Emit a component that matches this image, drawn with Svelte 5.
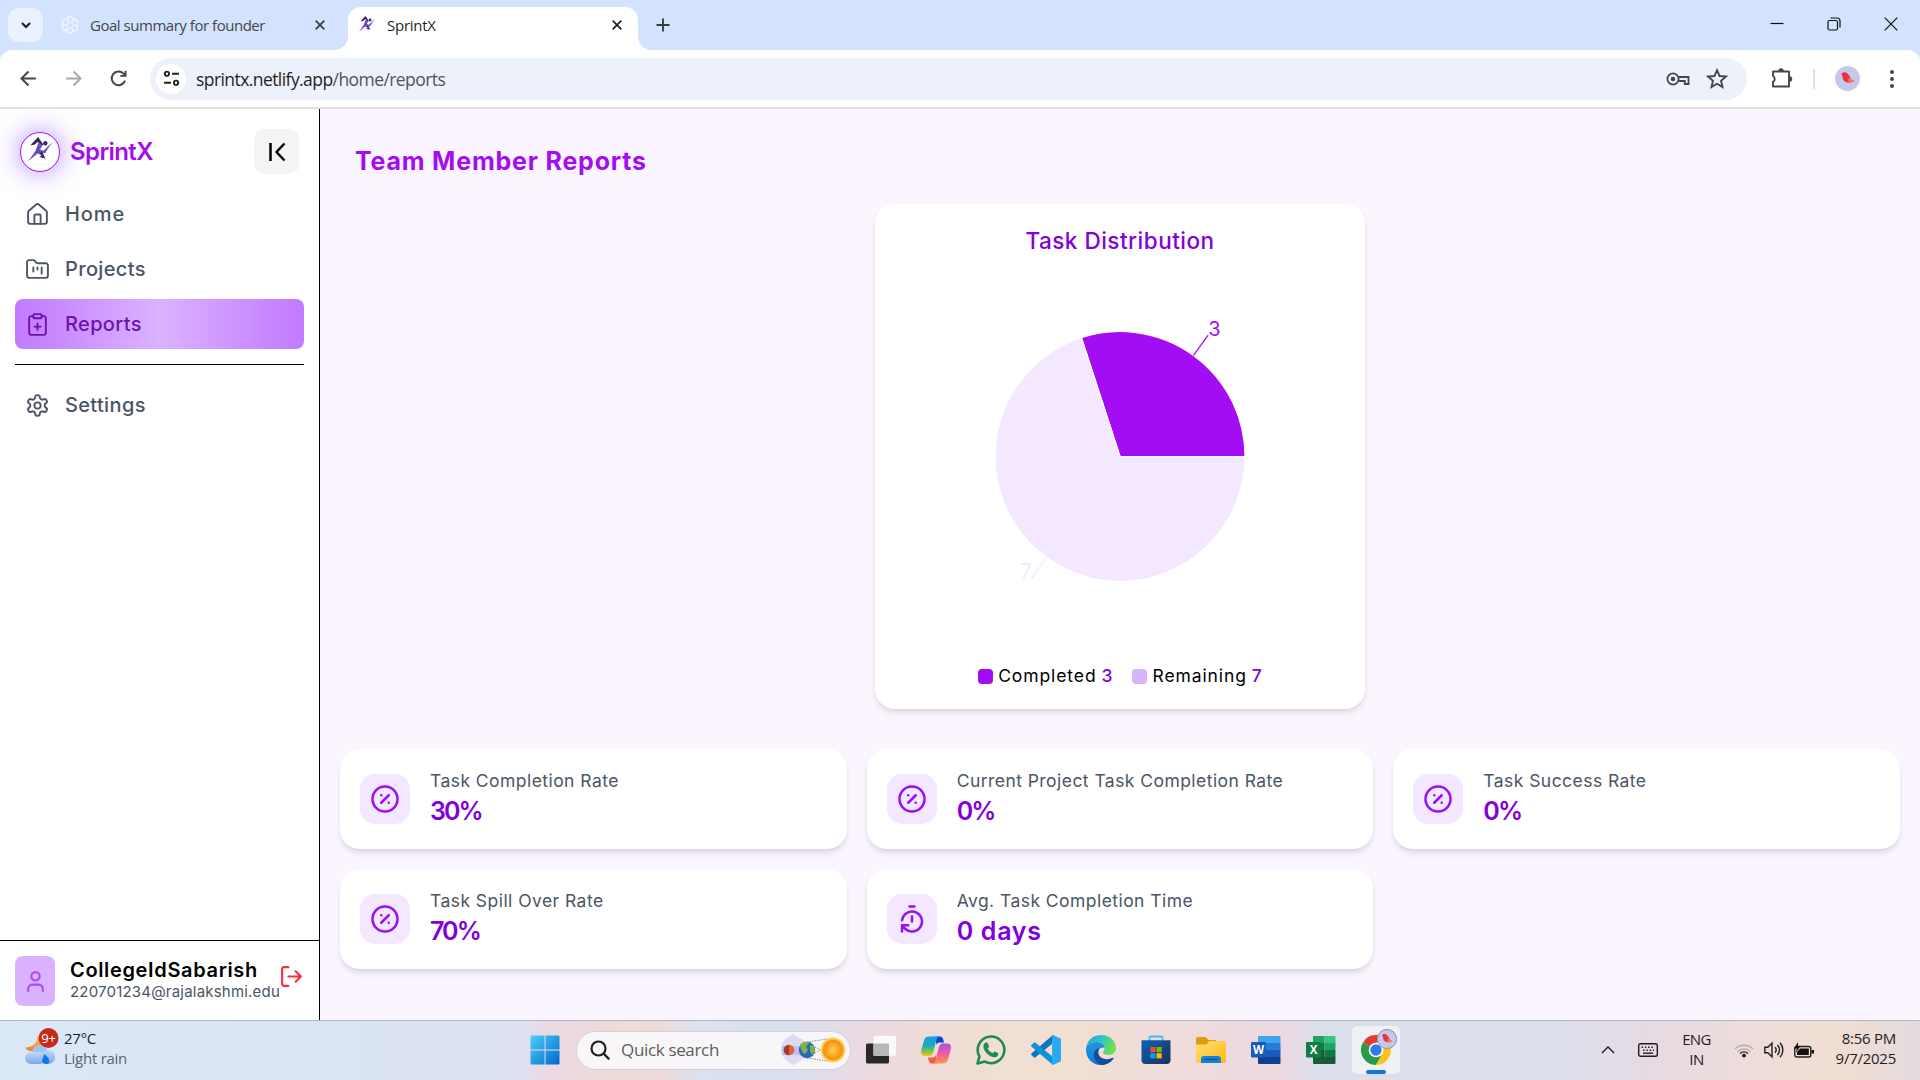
<script>
  const navItems = [
    { label: 'Home', icon: 'house' },
    { label: 'Projects', icon: 'kanban' },
    { label: 'Reports', icon: 'clipboard', active: true }
  ];

  const metrics = [
    { label: 'Task Completion Rate', value: '30%', icon: 'percent' },
    { label: 'Current Project Task Completion Rate', value: '0%', icon: 'percent' },
    { label: 'Task Success Rate', value: '0%', icon: 'percent' },
    { label: 'Task Spill Over Rate', value: '70%', icon: 'percent' },
    { label: 'Avg. Task Completion Time', value: '0 days', icon: 'timer' }
  ];

  const completed = 3;
  const remaining = 7;
  const cx = 245, cy = 171.5, r = 125;

  // Point on the pie, measured counter-clockwise from three o'clock.
  function point(angle, radius) {
    return [cx + radius * Math.cos(angle), cy - radius * Math.sin(angle)];
  }
  const split = (completed / (completed + remaining)) * 2 * Math.PI;
  const [sx, sy] = point(split, r);
  const completedPath = `M${cx} ${cy}L${cx + r} ${cy}A${r} ${r} 0 0 0 ${sx} ${sy}Z`;
  const remainingPath = `M${cx} ${cy}L${sx} ${sy}A${r} ${r} 0 1 0 ${cx + r} ${cy}Z`;
  const mid = split / 2;
  const [a1, a2] = point(mid, r);
  const [b1, b2] = point(mid, r + 25);
  const [c1, c2] = point(mid + Math.PI, r);
  const [d1, d2] = point(mid + Math.PI, r + 25);
</script>

{#snippet icon(name)}
  <svg class="lucide" viewBox="0 0 24 24">
    {#if name === 'house'}
      <path d="M15 21v-8a1 1 0 0 0-1-1h-4a1 1 0 0 0-1 1v8" />
      <path d="M3 10a2 2 0 0 1 .709-1.528l7-5.999a2 2 0 0 1 2.582 0l7 5.999A2 2 0 0 1 21 10v9a2 2 0 0 1-2 2H5a2 2 0 0 1-2-2z" />
    {:else if name === 'kanban'}
      <path d="M4 20h16a2 2 0 0 0 2-2V8a2 2 0 0 0-2-2h-7.93a2 2 0 0 1-1.66-.9l-.82-1.2A2 2 0 0 0 7.93 3H4a2 2 0 0 0-2 2v13c0 1.1.9 2 2 2Z" />
      <path d="M8 10v4M12 10v2M16 10v6" />
    {:else if name === 'clipboard'}
      <rect width="8" height="4" x="8" y="2" rx="1" />
      <path d="M16 4h2a2 2 0 0 1 2 2v14a2 2 0 0 1-2 2H6a2 2 0 0 1-2-2V6a2 2 0 0 1 2-2h2M9 14h6M12 17v-6" />
    {:else if name === 'settings'}
      <path d="M12.22 2h-.44a2 2 0 0 0-2 2v.18a2 2 0 0 1-1 1.73l-.43.25a2 2 0 0 1-2 0l-.15-.08a2 2 0 0 0-2.73.73l-.22.38a2 2 0 0 0 .73 2.73l.15.1a2 2 0 0 1 1 1.72v.51a2 2 0 0 1-1 1.74l-.15.09a2 2 0 0 0-.73 2.73l.22.38a2 2 0 0 0 2.73.73l.15-.08a2 2 0 0 1 2 0l.43.25a2 2 0 0 1 1 1.73V20a2 2 0 0 0 2 2h.44a2 2 0 0 0 2-2v-.18a2 2 0 0 1 1-1.73l.43-.25a2 2 0 0 1 2 0l.15.08a2 2 0 0 0 2.73-.73l.22-.39a2 2 0 0 0-.73-2.73l-.15-.08a2 2 0 0 1-1-1.74v-.5a2 2 0 0 1 1-1.74l.15-.09a2 2 0 0 0 .73-2.73l-.22-.38a2 2 0 0 0-2.73-.73l-.15.08a2 2 0 0 1-2 0l-.43-.25a2 2 0 0 1-1-1.73V4a2 2 0 0 0-2-2z" />
      <circle cx="12" cy="12" r="3" />
    {:else if name === 'user'}
      <path d="M19 21v-2a4 4 0 0 0-4-4H9a4 4 0 0 0-4 4v2" />
      <circle cx="12" cy="7" r="4" />
    {:else if name === 'logout'}
      <path d="M9 21H5a2 2 0 0 1-2-2V5a2 2 0 0 1 2-2h4M16 17l5-5-5-5M21 12H9" />
    {:else if name === 'percent'}
      <circle cx="12" cy="12" r="10" />
      <path d="m15 9-6 6M9 9h.01M15 15h.01" />
    {:else if name === 'timer'}
      <path d="M10 2h4M12 14v-4M4 13a8 8 0 0 1 8-7 8 8 0 1 1-5.3 14L4 17.6M9 17H4v5" />
    {/if}
  </svg>
{/snippet}

{#snippet runner()}
  <svg class="runner" viewBox="0 0 26 26">
    <defs>
      <linearGradient id="run" x1="0" y1="1" x2="1" y2="0">
        <stop offset="0" stop-color="#8b5cf0" /><stop offset=".5" stop-color="#6a45bd" /><stop offset="1" stop-color="#8f6ce4" />
      </linearGradient>
    </defs>
    <path d="M2.500 8.500 10.500 0l5.500 8-2 1-3.500-4-4 3Z" fill="#33235c" />
    <path d="m11 5 4 4-2.500 4 3.500 1.200 9.700-9.200-8 12-5.700-1.500L0 25.500l8-11.500Z" fill="url(#run)" />
    <circle cx="18" cy="6.500" r="2.300" fill="#3b2a69" />
    <path d="m9.500 16 5.500-.5 3.200 7-6.400-1.600 2.300-1.700Z" fill="#3b2a69" />
  </svg>
{/snippet}

{#snippet bird()}
  <svg viewBox="0 0 25 25">
    <circle cx="12.5" cy="12.5" r="12.5" fill="#c5c9e9" />
    <path d="M6 8.500 8 6.200l3.200.3c2.500 2 4 4 4.300 6.200l4 2.600-3 .2-1 1.200-2.400-.2c-4-.2-6-3.500-5.600-7Z" fill="#ee3045" />
    <path d="m12.500 12 3.500 1 3.500 2.500-3 0-.5 1.500-2.500-1Z" fill="#f4774d" />
  </svg>
{/snippet}

<div class="screen">
  <header class="tabs">
    <button class="tab-menu" aria-label="Search tabs">
      <svg width="10" height="8" viewBox="0 0 10 8" class="line"><path d="m1 2 4 4 4-4" stroke-width="2.100" /></svg>
    </button>
    <div class="tab idle">
      <svg class="gpt" viewBox="0 0 18 18">
        {#each [0, 60, 120, 180, 240, 300] as a}
          <path d="M9 6.600 6.200 5V3.600a3 3 0 0 1 5.600-1.300L15 4.200" transform="rotate({a} 9 9)" />
        {/each}
      </svg>
      <span class="tab-title long">Goal summary for founder</span>
      <svg class="x" viewBox="0 0 10 10"><path d="m.7.7 8.600 8.600M9.300.7.7 9.300" /></svg>
    </div>
    <div class="tab current">
      <div class="fav">{@render runner()}</div>
      <span class="tab-title">SprintX</span>
      <svg class="x" viewBox="0 0 10 10"><path d="m.7.7 8.600 8.600M9.300.7.7 9.300" /></svg>
    </div>
    <svg class="plus" viewBox="0 0 14 14"><path d="M7 .5v13M.5 7h13" /></svg>
    <div class="window-controls">
      <svg viewBox="0 0 14 14"><path d="M.5 6.500h13" /></svg>
      <svg viewBox="0 0 14 14"><rect x="1" y="3.500" width="9.500" height="9.500" rx="1.500" /><path d="M3.500 1H10a3 3 0 0 1 3 3v6.500" /></svg>
      <svg viewBox="0 0 14 14"><path d="m.7.7 12.600 12.600M13.300.7.7 13.300" /></svg>
    </div>
  </header>

  <div class="toolbar">
    <svg class="nav-ic" viewBox="0 0 20 20"><path d="M17 10H3.500M10 3.300 3.300 10l6.700 6.700" /></svg>
    <svg class="nav-ic dim" viewBox="0 0 20 20"><path d="M3 10h13.500M10 3.300l6.700 6.700-6.700 6.700" /></svg>
    <svg class="nav-ic" viewBox="0 0 20 20"><path d="M16.200 12A6.500 6.500 0 1 1 14.800 5.400L16.500 7M16.700 2.500v5h-5" /></svg>
    <div class="omnibox">
      <div class="site">
        <svg viewBox="0 0 16 16"><path d="M8.500 3.500h6.500M1 12h6.500" /><circle cx="3.700" cy="3.500" r="2" /><circle cx="12.300" cy="12" r="2" /></svg>
      </div>
      <span class="url">sprintx.netlify.app<i>/home/reports</i></span>
      <svg class="key" viewBox="0 0 24 16"><circle cx="7" cy="8" r="5.600" /><circle cx="7" cy="8" r="2.300" class="fill" /><path d="M12.300 6H22.500v7h-3.700V10h-6.500" /></svg>
      <svg class="star" viewBox="0 0 20 20"><path d="m10 2 2.300 5.300 5.700.5-4.300 3.800 1.300 5.700-5-3-5 3 1.300-5.700L2 7.800l5.700-.5Z" /></svg>
    </div>
    <svg class="puzzle" viewBox="0 0 22 22"><path d="M2 4.500h16v15H2v-4.700a3.300 3.300 0 0 0 0-5.800Z" /><path class="fill" d="M7.300 4a2.700 2.700 0 0 1 5.400 0ZM18.500 9.300a2.700 2.700 0 0 1 0 5.400Z" /></svg>
    <span class="divider"></span>
    <div class="profile">{@render bird()}</div>
    <div class="dots"><b></b><b></b><b></b></div>
  </div>

  <div class="page">
    <aside>
      <div class="brand">
        <div class="logo">{@render runner()}</div>
        <strong>SprintX</strong>
        <button class="collapse" aria-label="Collapse sidebar">
          <svg viewBox="0 0 20 20"><path d="M3.500 1v18M17.500 1.500 9.500 10l8 8.500" /></svg>
        </button>
      </div>
      <nav>
        {#each navItems as item}
          <a class:active={item.active} href="#{item.label}">{@render icon(item.icon)}<span>{item.label}</span></a>
        {/each}
        <hr />
        <a href="#Settings">{@render icon('settings')}<span>Settings</span></a>
      </nav>
      <footer>
        <div class="avatar">{@render icon('user')}</div>
        <div class="who">
          <strong>CollegeIdSabarish</strong>
          <small>220701234@rajalakshmi.edu</small>
        </div>
        <div class="logout">{@render icon('logout')}</div>
      </footer>
    </aside>

    <main>
      <h1>Team Member Reports</h1>
      <section class="chart">
        <h2>Task Distribution</h2>
        <svg class="pie" viewBox="0 0 490 375">
          <path d={completedPath} fill="#a30df4" stroke="#fff" stroke-width="1.250" />
          <path d={remainingPath} fill="#f3e8ff" stroke="#fff" stroke-width="1.250" />
          <path d="M{a1} {a2}L{b1} {b2}" stroke="#a30df4" stroke-width="1.250" />
          <path d="M{c1} {c2}L{d1} {d2}" stroke="#f3e8ff" stroke-width="1.250" />
          <text x={b1} y={b2 + 0.5} fill="#a30df4">{completed}</text>
          <text x={d1} y={d2 + 0.5} fill="#f3e8ff" text-anchor="end">{remaining}</text>
        </svg>
        <div class="legend">
          <span class="swatch"></span><span class="name">Completed</span><em>{completed}</em>
          <span class="swatch light"></span><span class="name">Remaining</span><em>{remaining}</em>
        </div>
      </section>
      <section class="metrics">
        {#each metrics as m}
          <article>
            <div class="badge">{@render icon(m.icon)}</div>
            <div>
              <p>{m.label}</p>
              <strong class:pct={m.value.endsWith('%')}>{m.value}</strong>
            </div>
          </article>
        {/each}
      </section>
    </main>
  </div>

  <div class="taskbar">
    <div class="weather">
      <svg viewBox="0 0 36 38">
        <defs>
          <linearGradient id="cloud" x1="0" y1="0" x2="0" y2="1"><stop offset="0" stop-color="#c3dbfa" /><stop offset="1" stop-color="#7aa6e8" /></linearGradient>
          <linearGradient id="moon" x1="0" y1="0" x2="0" y2="1"><stop offset="0" stop-color="#f9c240" /><stop offset="1" stop-color="#ee8420" /></linearGradient>
        </defs>
        <path d="M13 8C14 15 9 19 1 19.500c3 5 12 5 17-1L20 8Z" fill="url(#moon)" />
        <circle cx="16" cy="25" r="8" fill="#9fc3f3" />
        <rect x="1" y="24" width="21" height="12" rx="6" fill="url(#cloud)" />
        <circle cx="24" cy="29" r="7" fill="url(#cloud)" />
        <path d="M20 26c3 2 6 5 5 8.500-1 2.500-7 2-7-1.500 0-2 2-4 2-7Z" fill="#0b78f0" />
        <circle cx="24.500" cy="10" r="10" fill="#c42b1c" />
        <text x="24.500" y="14.700">9+</text>
      </svg>
      <div><span>27°C</span><span class="soft">Light rain</span></div>
    </div>

    <div class="apps">
      <svg class="app" viewBox="0 0 30 30">
        <defs><linearGradient id="win" x1="0" y1="0" x2="1" y2="1"><stop offset="0" stop-color="#4cd0fd" /><stop offset="1" stop-color="#0068c8" /></linearGradient></defs>
        <path d="M1.500.5H14.500v14H.5v-13a1 1 0 0 1 1-1ZM15.500.5h13a1 1 0 0 1 1 1v13H15.500ZM.5 15.500H14.500v14H1.500a1 1 0 0 1-1-1ZM15.500 15.500h14v13a1 1 0 0 1-1 1H15.500Z" fill="url(#win)" />
      </svg>
      <div class="search">
        <svg class="mag" viewBox="0 0 20 20"><circle cx="8.500" cy="8.500" r="7" /><path d="m13.600 13.600 5 5" /></svg>
        <span>Quick search</span>
        <svg class="planets" viewBox="0 0 68 34">
          <defs>
            <radialGradient id="sun"><stop offset="0" stop-color="#ffd24a" /><stop offset=".75" stop-color="#f98d14" /><stop offset=".85" stop-color="#fcc02e" /><stop offset="1" stop-color="#ffe06b" /></radialGradient>
          </defs>
          <path d="M13 1C-3 8-3 24 13 32l12-7V8Z" fill="#c9c9ec" opacity=".6" />
          <path d="M2 13h23v9H2Z" fill="#9fa0dd" opacity=".45" />
          <path d="m27 9 27-4M27 25l27 4M35 14l18 10M35 20l18-10" stroke="#73777f" stroke-width=".8" stroke-dasharray="1.500 1" fill="none" />
          <circle cx="9" cy="17" r="5.300" fill="#d8653c" /><path d="M9 11.700a5.300 5.300 0 0 0 0 10.600Z" fill="#a23a34" />
          <circle cx="27" cy="17" r="8.200" fill="#2769b8" /><path d="M20 12c3-4 8-4 9-2l-3 4 2 3-3 4c-3-1-4-5-5-9ZM30 12l4 1 1 5-3 4-2-4Z" fill="#7db648" />
          <circle cx="53" cy="17" r="12.500" fill="url(#sun)" />
        </svg>
      </div>
      <svg class="app" viewBox="0 0 30 30">
        <rect x="0" y="8.500" width="23" height="20" rx="1.500" fill="#292929" /><rect x="7.500" y=".7" width="22.500" height="20" rx="1.500" fill="#fafafa" /><path d="M7.500 8.500H23v12.200H7.500Z" fill="#b8b8b8" />
      </svg>
      <svg class="app" viewBox="0 0 30 30">
        <defs>
          <linearGradient id="cpA" x1="0" y1="0" x2="0" y2="1"><stop offset="0" stop-color="#1a9ff0" /><stop offset=".45" stop-color="#17a9b9" /><stop offset=".75" stop-color="#7cc34a" /><stop offset="1" stop-color="#f5c528" /></linearGradient>
          <linearGradient id="cpB" x1="0" y1="0" x2="0" y2="1"><stop offset="0" stop-color="#a254ee" /><stop offset=".5" stop-color="#ee5c9c" /><stop offset="1" stop-color="#fb9a4c" /></linearGradient>
        </defs>
        <path d="M14 1.500h5c2.500 0 3.200 2 4 6h-4c-2 0-3 .6-3.500 2.500Z" fill="#1642c8" />
        <path d="M16 28.500h-5c-2.500 0-3.200-2-4-6h4c2 0 3-.6 3.500-2.500Z" fill="#f5603a" />
        <path d="M8 1.500h10c-2.500 1-3 5-4.500 11-1.500 7-2.500 8.500-5.500 8.500H4c-4 0-4.500-3-3.500-7L3 5.500c.8-2.700 2.200-4 5-4Z" fill="url(#cpA)" />
        <path d="M22 28.500H12c2.500-1 3-5 4.500-11C18 10.500 19 8.500 22 8.500h4c4 0 4.500 3 3.500 7L27 24.500c-.8 2.700-2.200 4-5 4Z" fill="url(#cpB)" />
      </svg>
      <svg class="app" viewBox="0 0 30 30">
        <path d="M1.500 28.500 3.400 21.300A13.300 13.300 0 1 1 8.800 26.600Z" fill="none" stroke="#1f8b54" stroke-width="2.600" stroke-linejoin="round" />
        <path d="M10 7.500c1 0 1.600 0 2 1.200l1 2.500c.3.800-1.500 2-1.200 2.500 1 2 2.500 3.300 4.700 4.300.7.300 1.500-1.800 2.400-1.500l3 1.500c1 .6.300 4-3 4.200-5 .3-12-6.500-11.500-11.300.2-1.800 1.500-3.300 2.600-3.400Z" fill="#1f8b54" />
      </svg>
      <svg class="app" viewBox="0 0 30 30">
        <path d="m22 0-.5 8.500L4.500 22.300c-.6.400-1.100.4-1.600 0L.6 20.200c-.7-.6-.6-1.400 0-2Z" fill="#0877c0" />
        <path d="m22 30-.5-8.500L4.500 7.700c-.6-.4-1.100-.4-1.600 0L.6 9.800c-.7.600-.6 1.400 0 2Z" fill="#1191da" />
        <path d="M22 0l7 3.200c.6.300 1 .8 1 1.500v20.600c0 .7-.4 1.200-1 1.500L22 30c-1.200 0-.9-1-.9-1.500v-27C21.100 1 20.900 0 22 0Z" fill="#29a8f3" />
      </svg>
      <svg class="app" viewBox="0 0 30 30">
        <defs>
          <linearGradient id="edA" x1="0" y1="0" x2="1" y2=".3"><stop offset="0" stop-color="#22a5dd" /><stop offset=".55" stop-color="#2fc4c8" /><stop offset="1" stop-color="#6fe050" /></linearGradient>
          <linearGradient id="edB" x1="0" y1="0" x2=".3" y2="1"><stop offset="0" stop-color="#1d9be6" /><stop offset="1" stop-color="#1276cf" /></linearGradient>
        </defs>
        <path d="M0 14C1 5 7 0 15 0c9 0 15 6 15 13 0 4-3 7-7 7-3 0-6-1-6-2.500 0-1 1.500-1 1.500-4C18.500 9 14 7 10 7 4 7 1 10 0 14Z" fill="url(#edA)" />
        <path d="M0 15C0 10 4 7 10 7c4 0 8.500 2 8.500 6-2-1.500-6 0-6.500 4-.5 5 4 8 9 8 3 0 5-1 6.500-1.800C25 27.500 20 30 15 30 6 30 0 23 0 15Z" fill="url(#edB)" />
        <path d="M13.500 13c-4 1-7 5-5 10 1.300 3.500 4 6.500 7.500 7 5-.3 9-3 11.500-6.500.3-.7-.2-1-.8-.7-6 3-13 1-14.200-4-.4-2 .1-4.500 1-5.800Z" fill="#124c9b" />
      </svg>
      <svg class="app" viewBox="0 0 30 30">
        <defs><linearGradient id="store" x1="0" y1="0" x2="1" y2="1"><stop offset="0" stop-color="#0c62b8" /><stop offset="1" stop-color="#202d55" /></linearGradient></defs>
        <path d="M8.500 6V3c0-1 .5-1.500 1.500-1.500h10c1 0 1.500.5 1.500 1.500v3" fill="none" stroke="#35c1f5" stroke-width="1.800" />
        <path d="M.5 5.300h29V25a4 4 0 0 1-4 4h-21a4 4 0 0 1-4-4Z" fill="url(#store)" />
        <path d="M9.300 12h5.200v5.200H9.300Z" fill="#f25022" /><path d="M15.500 12h5.200v5.200h-5.200Z" fill="#7fba00" /><path d="M9.300 18.200h5.200v5.200H9.300Z" fill="#00a4ef" /><path d="M15.500 18.200h5.200v5.200h-5.200Z" fill="#ffb900" />
      </svg>
      <svg class="app" viewBox="0 0 30 30">
        <defs><linearGradient id="fold" x1="0" y1="0" x2="1" y2="1"><stop offset="0" stop-color="#ffe07a" /><stop offset="1" stop-color="#fdb913" /></linearGradient></defs>
        <path d="M0 4c0-1.200.7-2 2-2h7.500l3 3H20v6H0Z" fill="#dd9d0e" />
        <path d="M0 9.500h10.500L13.500 6H28c1.300 0 2 .8 2 2v18c0 1.300-.7 2-2 2H2c-1.300 0-2-.7-2-2Z" fill="url(#fold)" />
        <path d="M5 28v-4c0-2 1-3 3-3h14c2 0 3 1 3 3v4Z" fill="#1583d8" /><path d="M8.500 24.500h13" stroke="#0b5596" stroke-width="1.300" />
      </svg>
      <svg class="app office" viewBox="0 0 30 30">
        <path d="M8 1h20.500a1 1 0 0 1 1 1v6H7V2a1 1 0 0 1 1-1Z" fill="#41a5ee" /><path d="M7 8h22.500v7H7Z" fill="#2b7cd3" /><path d="M7 15h22.500v7H7Z" fill="#185abd" /><path d="M7 22h22.500v6a1 1 0 0 1-1 1H8a1 1 0 0 1-1-1Z" fill="#103f91" />
        <rect x="0" y="7" width="15" height="15.500" rx="1.300" fill="#185abd" /><text x="7.500" y="18.700">W</text>
      </svg>
      <svg class="app office" viewBox="0 0 30 30">
        <path d="M8 1h10.500v7H7V2a1 1 0 0 1 1-1Z" fill="#21a366" /><path d="M18.500 1h10a1 1 0 0 1 1 1v6h-11Z" fill="#33c481" /><path d="M7 8h11.500v7H7Z" fill="#107c41" /><path d="M18.500 8h11v7h-11Z" fill="#21a366" /><path d="M18.500 15h11v7h-11Z" fill="#107c41" /><path d="M7 15h11.500v7h11v6a1 1 0 0 1-1 1H8a1 1 0 0 1-1-1Z" fill="#185c37" />
        <rect x="0" y="7" width="15" height="15.500" rx="1.300" fill="#107c41" /><text x="7.500" y="18.700">X</text>
      </svg>
      <div class="running">
        <svg class="app" viewBox="0 0 30 30">
          <path d="M15 15 2 7.500a15 15 0 0 1 26 0Z" fill="#e33b2e" /><path d="M15 15 2 7.500A15 15 0 0 0 15 30l6.500-11.250Z" fill="#2a9a48" /><path d="M15 15 21.500 18.750 15 30A15 15 0 0 0 28 7.500H15Z" fill="#fcc419" />
          <circle cx="15" cy="15" r="7.300" fill="#fff" /><circle cx="15" cy="15" r="5.700" fill="#2f7bea" />
        </svg>
        <div class="mini">{@render bird()}</div>
        <i></i>
      </div>
    </div>

    <div class="tray">
      <svg class="chev" viewBox="0 0 14 8"><path d="m1 7 6-6 6 6" /></svg>
      <svg class="kbd" viewBox="0 0 20 14"><rect x=".7" y=".7" width="18.600" height="12.600" rx="1.800" /><path d="M5 10.200h10" /><path d="M3.500 4.200h13M5 7.200h11" stroke-dasharray="1.500 1.800" /></svg>
      <div class="lang"><span>ENG</span><span>IN</span></div>
      <svg class="wifi" viewBox="0 0 20 16"><path class="faint" d="M.8 7a13 13 0 0 1 18.400 0M3.500 9.700a9.200 9.200 0 0 1 13 0" /><path d="M6 11.500a5.700 5.700 0 0 1 8 0" /><circle cx="10" cy="13.600" r="1.900" /></svg>
      <svg class="vol" viewBox="0 0 20 18"><path d="M.8 6.200h3L8 2.200v13.600l-4.200-4h-3ZM11 6.300a4 4 0 0 1 0 5.400M13.500 4a7.300 7.300 0 0 1 0 10M16 1.800a10.500 10.500 0 0 1 0 14.400" /></svg>
      <svg class="bat" viewBox="0 0 20 16"><rect x=".8" y="4.500" width="16" height="10.500" rx="2" /><path class="solid" d="M6 6.500h8.800v6.500H3V10ZM17.500 8H20v3.500h-2.500ZM4 0 0 6.500h2.700L2 10.500 6.500 4H4Z" /></svg>
      <div class="clock"><span>8:56 PM</span><span>9/7/2025</span></div>
    </div>
  </div>
</div>

<style>
  :global(body) { margin: 0; overflow: hidden; }
  * { box-sizing: border-box; }
  svg { display: block; flex: none; fill: none; }
  button { border: 0; padding: 0; display: grid; place-items: center; }
  .screen { width: 1920px; height: 1080px; display: flex; flex-direction: column; background: #fff; font-family: Inter, 'Open Sans', sans-serif; }

  .tabs { height: 57px; margin-bottom: -7px; background: #d3e3fd; display: flex; align-items: flex-start; padding: 7px 20px 0 8px; font-family: 'Open Sans', sans-serif; }
  .tab-menu { width: 35px; height: 34px; margin-top: 1px; border-radius: 11px; background: #ebf1fe; }
  .line path { stroke: #1f1f1f; }
  .tab { display: flex; align-items: center; height: 36px; }
  .tab.idle { width: 305px; padding: 0 23px 0 18px; color: #474747; }
  .gpt { width: 18px; height: 18px; stroke: #f3f7ff; stroke-width: 1.2; }
  .tab-title { font-size: 15px; letter-spacing: -.25px; margin-left: 10px; flex: 1; white-space: nowrap; }
  .long { letter-spacing: -.47px; margin-left: 11px; }
  .x { width: 10px; height: 10px; stroke: #3c3c3c; stroke-width: 1.7; }
  .current { position: relative; width: 290px; height: 43px; padding: 0 16px 7px 11px; background: #fff; border-radius: 13px 13px 0 0; color: #1f1f1f; }
  .current .x { stroke: #1f1f1f; }
  .current::before, .current::after { content: ''; position: absolute; bottom: 0; width: 13px; height: 13px; }
  .current::before { left: -13px; background: radial-gradient(circle at 0 0, transparent 12.5px, #fff 13px); }
  .current::after { right: -13px; background: radial-gradient(circle at 100% 0, transparent 12.5px, #fff 13px); }
  .fav { width: 16px; margin-bottom: 3px; }
  .runner { width: 100%; }
  .current .tab-title { margin-left: 12px; }
  .plus { width: 14px; height: 14px; margin: 11px 0 0 18px; stroke: #3c3c3c; stroke-width: 1.9; }
  .window-controls { margin: 10px 2px 0 auto; display: flex; gap: 43px; }
  .window-controls svg { width: 14px; height: 14px; stroke: #111; stroke-width: 1.2; }

  .toolbar { position: relative; height: 59px; flex: none; background: #fff; border-radius: 12px 12px 0 0; border-bottom: 2px solid #dfe1e1; display: flex; align-items: center; padding: 0 26px 0 18px; }
  .nav-ic { width: 21px; height: 21px; margin-right: 24px; stroke: #444746; stroke-width: 1.9; }
  .nav-ic.dim { stroke: #a8a9a8; }
  .nav-ic:nth-child(3) { margin-right: 21px; }
  .omnibox { width: 1597px; height: 42px; border-radius: 21px; background: #ecf1fa; display: flex; align-items: center; padding: 0 19px 0 6px; }
  .site { width: 30px; height: 30px; border-radius: 50%; background: #fff; display: grid; place-items: center; }
  .site svg { width: 17px; height: 17px; stroke: #222; stroke-width: 1.8; }
  .url { flex: 1; margin-left: 10px; font: 17.5px 'Open Sans', sans-serif; letter-spacing: -.57px; color: #1f1f1f; }
  .url i { font-style: normal; color: #50545a; }
  .key { width: 24px; height: 16px; stroke: #444746; stroke-width: 1.8; }
  .fill { fill: #444746; stroke: none; }
  .star { width: 22px; height: 22px; margin-left: 16px; stroke: #444746; stroke-width: 1.7; }
  .puzzle { width: 22px; height: 22px; margin: 0 0 2px 24px; stroke: #444746; stroke-width: 1.9; stroke-linejoin: round; }
  .divider { width: 2px; height: 20px; background: #d3e3fd; margin: 0 20px 0 20px; }
  .profile { width: 25px; margin-left: auto; }
  .dots { display: grid; gap: 3px; margin-left: 30px; }
  .dots b { width: 4px; height: 4px; border-radius: 50%; background: #444746; }

  .page { flex: 1; min-height: 0; display: flex; }
  aside { width: 320px; border-right: 1px solid #000; display: flex; flex-direction: column; background: #fff; }
  .brand { display: flex; align-items: center; padding: 20px 20px 0; height: 65px; }
  .logo { width: 40px; height: 40px; border-radius: 50%; border: 1.25px solid #a30df4; background: #fff; box-shadow: 0 0 25px 2px rgba(130, 60, 246, .5); padding: 4px 6px 8px 7px; }
  .brand strong { font-size: 24px; font-weight: 600; letter-spacing: -.6px; color: #a30df4; margin-left: 10px; flex: 1; }
  .collapse { width: 45px; height: 45px; border-radius: 10px; background: #f3f4f6; }
  .collapse svg { width: 20px; height: 20px; margin-left: 1px; stroke: #000; stroke-width: 2.5; stroke-linejoin: round; }
  .lucide { width: 25px; height: 25px; stroke: currentColor; stroke-width: 2; stroke-linecap: round; stroke-linejoin: round; }
  nav { display: flex; flex-direction: column; gap: 5px; padding: 15px 15px 0; }
  nav a { height: 50px; border-radius: 8px; display: flex; align-items: center; gap: 15px; padding: 0 10px; color: #4a5565; font-size: 20px; font-weight: 500; letter-spacing: .35px; text-decoration: none; }
  nav a:first-child { letter-spacing: .9px; }
  nav .lucide { stroke-width: 1.8; }
  nav a.active { background: linear-gradient(90deg, #c27aff, #dab2ff 50%, #c27aff); color: #6e11b0; }
  hr { width: 100%; border: 0; height: 1px; background: #000; margin: 10px 0 10px; }
  footer { margin-top: auto; height: 80px; border-top: 1px solid #000; display: flex; align-items: flex-start; padding: 15px 15px 0; }
  .avatar { width: 40px; height: 50px; border-radius: 8px; background: #dab2ff; color: #ad46ff; display: grid; place-items: center; }
  .who { width: 209px; margin-left: 15px; overflow: hidden; white-space: nowrap; display: flex; flex-direction: column; }
  .who strong { font-size: 20px; line-height: 28px; font-weight: 600; letter-spacing: .65px; color: #000; }
  .who small { font-size: 15px; line-height: 16px; letter-spacing: .2px; color: #4a5565; }
  .logout { color: #fb2c36; margin-top: 8px; }

  main { flex: 1; background: #faf5ff; padding: 32px 20px 0; display: flex; flex-direction: column; }
  h1 { margin: 0 0 23px 15px; font-size: 25px; line-height: 40px; font-weight: 700; letter-spacing: .8px; color: #a30df4; }
  .chart, article { background: #fff; border-radius: 20px; box-shadow: 0 5px 7px -1px rgba(0, 0, 0, .1), 0 2px 4px -2px rgba(0, 0, 0, .1); }
  .chart { width: 490px; height: 505px; margin-top: -7px; margin-top: 0; align-self: center; display: flex; flex-direction: column; align-items: center; padding-top: 19px; }
  h2 { margin: 0; font-size: 22.5px; line-height: 35px; font-weight: 500; letter-spacing: .5px; color: #8200db; }
  .pie { width: 490px; height: 375px; margin-top: 26.500px; }
  .pie text { font-size: 20px; }
  .legend { display: flex; align-items: center; margin-top: 3.500px; font-size: 17.5px; line-height: 26px; color: #000; }
  .swatch { width: 15px; height: 15px; border-radius: 4px; background: #a30df4; margin-right: 5px; }
  .swatch.light { background: #d8b4fa; margin-left: 20px; }
  .name { letter-spacing: .9px; }
  em { font-style: normal; font-weight: 500; color: #8200db; margin-left: 5px; }
  .metrics { margin-top: 40px; display: grid; grid-template-columns: repeat(3, 1fr); gap: 20px; }
  article { height: 100px; display: flex; align-items: center; padding: 0 20px; gap: 20px; }
  .badge { width: 50px; height: 50px; border-radius: 15px; background: #f3e8ff; color: #9810fa; display: grid; place-items: center; }
  .badge .lucide { width: 30px; height: 30px; }
  p { margin: -1px 0 1px; font-size: 17.5px; line-height: 25px; letter-spacing: .45px; color: #4a5565; white-space: nowrap; }
  article strong { display: block; font-size: 25px; line-height: 35px; font-weight: 600; letter-spacing: .7px; color: #8200db; }
  article .pct { letter-spacing: -1.9px; }

  .taskbar { height: 60px; border-top: 1px solid #b4b4c4; display: flex; align-items: center; padding-bottom: 1px; font-family: 'Open Sans', sans-serif; font-size: 15px; letter-spacing: -.26px; line-height: 20px; color: #1f1f1f;
    background: linear-gradient(90deg, #dbe8f8 0, #dae5f5 250px, #dce2f1 520px, #ecd9e3 548px, #efdada 600px, #eedbd9 660px, #dbe1ee 700px, #d9e0ee 790px, #ead9e3 860px, #efdbd8 920px, #f1dfd1 1000px, #f1e0d1 1060px, #f0dcda 1160px, #ecd9e1 1280px, #dadfeb 1320px, #dddfed 1560px, #e6dae3 1650px, #efddd7 1780px, #f0ddd2 1840px, #e4dbde 1920px); }
  .weather { display: flex; width: 529.500px; padding-left: 24px; margin-top: -4px; }
  .weather svg { width: 36px; height: 38px; margin-right: 4px; }
  .weather text { fill: #fff; font-size: 13px; text-anchor: middle; }
  .weather div, .lang, .clock { display: flex; flex-direction: column; }
  .soft { color: #5c6370; }
  .apps { display: flex; align-items: center; gap: 25px; }
  .app { width: 30px; height: 30px; }
  .search { width: 275px; height: 39px; margin: 0 -10px 0 -8.500px; border-radius: 20px; border: 1px solid #d6cfd5; background: #f8f6f9; display: flex; align-items: center; padding: 0 2px 0 13px; }
  .mag { width: 20px; height: 20px; stroke: #1f1f1f; stroke-width: 2.2; stroke-linecap: round; }
  .search span { flex: 1; margin-left: 11px; font-size: 17px; letter-spacing: -.34px; color: #5d5d5f; }
  .planets { width: 68px; height: 34px; }
  .office text { fill: #fff; font: 700 11.5px 'Open Sans'; text-anchor: middle; }
  .running { position: relative; width: 48px; height: 48px; margin-left: -9px; border-radius: 5px; background: rgba(255, 255, 255, .55); display: grid; place-items: center; }
  .mini { position: absolute; width: 20px; right: 3px; top: 3px; border-radius: 50%; outline: 1px solid #8f92a8; outline-offset: -1px; }
  .running i { position: absolute; bottom: 0; left: 14px; width: 20px; height: 4px; border-radius: 2px; background: #0f78d4; }
  .tray { margin-left: auto; padding-right: 24px; display: flex; align-items: center; }
  .tray svg { stroke: #1f1f1f; stroke-width: 1.4; }
  .chev { width: 14px; height: 8px; margin-right: 23px; }
  .kbd { width: 20px; height: 14px; margin-right: 24px; }
  .lang { align-items: center; width: 29px; margin: -2px 23px 0 0; letter-spacing: -.6px; }
  .wifi { width: 20px; height: 16px; margin-right: 10px; }
  .wifi circle { fill: #1f1f1f; stroke: none; }
  .tray .wifi .faint { stroke: #b9adb0; }
  .vol { width: 20px; height: 18px; margin-right: 10px; }
  .bat { width: 20px; height: 16px; margin-right: 20px; }
  .bat .solid { fill: #111; stroke: none; }
  .clock { align-items: flex-end; width: 62px; margin-top: -4px; }
</style>
